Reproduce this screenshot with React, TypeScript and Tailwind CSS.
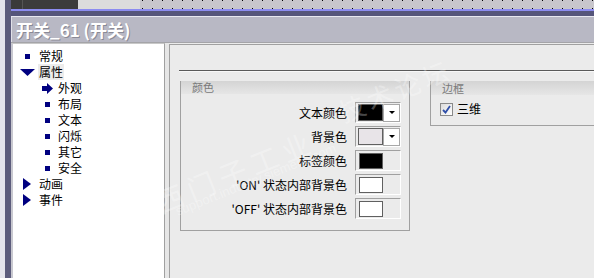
import { ReactNode } from 'react';

const cjk = { fontFamily: '"Noto Sans CJK SC", "Liberation Sans", sans-serif' };

function Square() {
    return <span className="inline-block w-[5px] h-[5px] bg-[#000080]" />;
}

function TriDown() {
    return (
        <svg width="15" height="7" viewBox="0 0 15 7">
            <polygon points="0,0 15,0 7.5,7" fill="#000080" />
        </svg>
    );
}

function TriRight() {
    return (
        <svg width="8" height="12" viewBox="0 0 8 12">
            <polygon points="0,0 8,6 0,12" fill="#000080" />
        </svg>
    );
}

function ArrowRight() {
    return (
        <svg width="11" height="11" viewBox="0 0 11 11">
            <polygon points="0,3 5,3 5,0 11,5.5 5,11 5,8 0,8" fill="#000080" />
        </svg>
    );
}

type ItemProps = { icon: ReactNode, label: string, indent?: boolean, selected?: boolean }

function TreeItem({ icon, label, indent, selected }: ItemProps) {
    return (
        <div className={"flex items-center h-[16px] " + (indent ? "pl-[25px]" : "pl-[3px]")}>
            <span className={"flex items-center justify-center " + (indent ? "w-[19px]" : "w-[22px]")}>{icon}</span>
            <span className={"px-[1px] leading-[16px] " + (selected ? "bg-[#ececec]" : "")}>{label}</span>
        </div>
    );
}

function Dots() {
    return (
        <div className="flex gap-[9px] pl-[2px]">
            {Array.from({ length: 46 }).map((_, i) => (
                <span key={i} className="w-px h-px bg-black" />
            ))}
        </div>
    );
}

type RowProps = { label: string, color: string, dropdown?: boolean }

function ColorRow({ label, color, dropdown }: RowProps) {
    return (
        <div className="flex items-center h-[21px]">
            <span className="w-[166px] text-right text-[12px] text-black">{label}</span>
            <div className="ml-[8px] w-[46px] h-[21px] border border-t-[#a0a0a0] border-l-[#a0a0a0] border-b-white border-r-white bg-[#ebebeb] flex items-center pl-[2px]">
                {dropdown ? (
                    <>
                        <div className="w-[25px] h-[17px] border border-[#606060]" style={{ background: color }} />
                        <div className="w-[17px] h-[18px] bg-white border border-[#a8a8a8] flex items-center justify-center">
                            <svg width="6" height="3" viewBox="0 0 6 3"><polygon points="0,0 6,0 3,3" fill="#000" /></svg>
                        </div>
                    </>
                ) : (
                    <div className="ml-[1px] w-[24px] h-[16px] border border-[#606060]" style={{ background: color }} />
                )}
            </div>
        </div>
    );
}

export default function App() {
    return (
        <div className="relative w-[594px] h-[278px] overflow-hidden flex bg-[#ebebeb] text-[12px]" style={cjk}>
            <div className="w-[5px] h-full bg-[#e4e4ec]" />
            <div className="w-[6px] h-full bg-[#5c5c7c]" />
            <div className="flex-1 flex flex-col">
                <div className="h-[9px] flex">
                    <div className="w-[12px] bg-[#3a3a3a] border-r border-[#555]" />
                    <div className="w-[55px] bg-[#3c3c3c]" />
                    <div className="w-[62px] bg-[#dcdcdc]" />
                    <div className="flex-1 bg-[#c8c6cc] flex flex-col justify-between">
                        <Dots />
                        <Dots />
                    </div>
                </div>
                <div className="h-[2px] bg-[#8c8cf0]" />
                <div className="h-[5px] bg-[#55557a]" />
                <div className="h-px bg-[#e8e8f0]" />
                <div className="h-[25px] bg-[#b8b8c4] flex items-center pl-[4px] border-l border-[#e0e0e8]">
                    <span className="text-[17px] font-bold text-white [text-shadow:1px_1px_0_#8a8a96]">开关_61 (开关)</span>
                </div>
                <div className="h-px bg-[#a4a4a8]" />
                <div className="flex-1 flex">
                    <div className="w-[154px] bg-white border-l-[2px] border-r border-t border-l-[#c8c8d0] border-r-[#a0a0a0] border-t-[#c8c8c8] pt-[4px] text-black">
                        <TreeItem icon={<Square />} label="常规" />
                        <TreeItem icon={<TriDown />} label="属性" selected />
                        <TreeItem icon={<ArrowRight />} label="外观" indent />
                        <TreeItem icon={<Square />} label="布局" indent />
                        <TreeItem icon={<Square />} label="文本" indent />
                        <TreeItem icon={<Square />} label="闪烁" indent />
                        <TreeItem icon={<Square />} label="其它" indent />
                        <TreeItem icon={<Square />} label="安全" indent />
                        <TreeItem icon={<TriRight />} label="动画" />
                        <TreeItem icon={<TriRight />} label="事件" />
                    </div>
                    <div className="w-[4px] bg-[#e6e6e6]" />
                    <div className="flex-1 border-l border-t border-[#a0a0a0] mt-[1px] bg-[#ebebeb]">
                        <div className="mt-[25px] ml-[9px] h-px bg-[#5a5a5a]" />
                        <div className="h-px ml-[9px] bg-[#f8f8f8]" />
                        <div className="flex mt-[9px]">
                            <div className="ml-[10px] w-[230px] h-[150px] border-l border-r border-b border-[#a0a0a0]">
                                <div className="h-[13px] bg-gradient-to-b from-[#d4d4d4] to-[#e6e6e6] text-[11px] text-[#7a7a7a] pl-[11px] leading-[13px]">颜色</div>
                                <div className="flex flex-col gap-[3px] mt-[8px] text-black">
                                    <ColorRow label="文本颜色" color="#000000" dropdown />
                                    <ColorRow label="背景色" color="#e8e4e8" dropdown />
                                    <ColorRow label="标签颜色" color="#000000" />
                                    <ColorRow label="'ON' 状态内部背景色" color="#ffffff" />
                                    <ColorRow label="'OFF' 状态内部背景色" color="#ffffff" />
                                </div>
                            </div>
                            <div className="ml-[20px] flex-1 h-[45px] border-l border-b border-[#a0a0a0]">
                                <div className="h-[14px] bg-gradient-to-b from-[#d4d4d4] to-[#e6e6e6] text-[11px] text-[#7a7a7a] pl-[11px] leading-[14px]">边框</div>
                                <div className="flex items-center mt-[5px] ml-[9px]">
                                    <div className="w-[13px] h-[13px] border border-[#8a8a8a] bg-gradient-to-br from-[#dcdcdc] to-white flex items-center justify-center">
                                        <svg width="9" height="9" viewBox="0 0 9 9"><polyline points="1,5 3.5,7.5 8,1" fill="none" stroke="#2f4fa8" strokeWidth="1.8" /></svg>
                                    </div>
                                    <span className="ml-[4px] text-[12px] text-black">三维</span>
                                </div>
                            </div>
                        </div>
                    </div>
                </div>
            </div>
            <div className="absolute left-[150px] top-[150px] -rotate-[22deg] text-[28px] text-white/30 pointer-events-none tracking-[6px]">西门子工业</div>
            <div className="absolute left-[170px] top-[170px] -rotate-[22deg] text-[13px] text-white/30 pointer-events-none" style={{ fontFamily: '"Liberation Sans", sans-serif' }}>support.industry.siemens.com</div>
            <div className="absolute left-[335px] top-[70px] -rotate-[22deg] text-[26px] text-white/30 pointer-events-none tracking-[4px]">技术论坛</div>
        </div>
    );
}
